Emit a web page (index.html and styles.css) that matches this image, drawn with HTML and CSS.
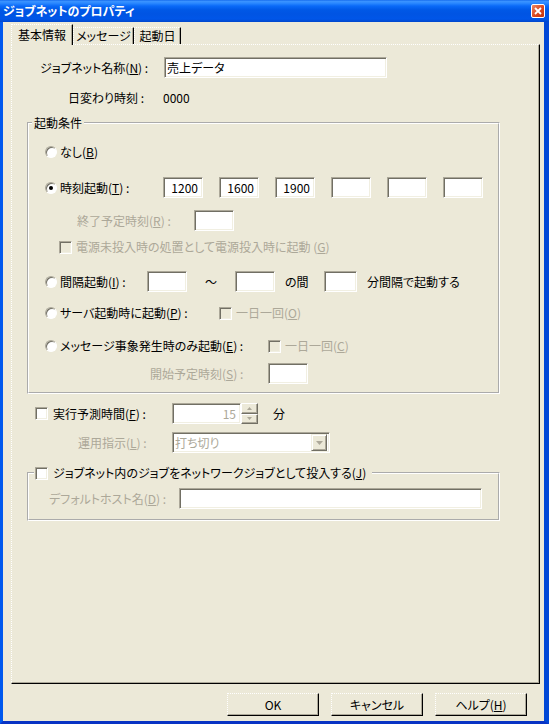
FILE: index.html
```html
<!doctype html>
<html lang="ja">
<head>
  <meta charset="utf-8">
  <meta name="viewport" content="width=device-width,initial-scale=1">
  <title>ジョブネットのプロパティ</title>
  <link rel="stylesheet" href="styles.css">
</head>
<body>
<div class="window">
  <div class="titlebar">
    <span class="title">ジョブネットのプロパティ</span>
    <button class="close" title="閉じる">
      <svg width="8" height="8" viewBox="0 0 8 8"><path d="M1 1L7 7M7 1L1 7" stroke="#fff" stroke-width="1.8"/></svg>
    </button>
  </div>

  <div class="frame">
    <div class="client">
      <div class="tabs">
        <div class="tab tab-info active">基本情報</div>
        <div class="tab tab-msg">メッセージ</div>
        <div class="tab tab-day">起動日</div>
      </div>

      <div class="panel">
        <div class="row row-name">
          <label class="lbl lbl-name">ジョブネット名称(<u>N</u>) :</label>
          <input class="edit edit-name" type="text" value="売上データ">
        </div>
        <div class="row row-day">
          <span class="lbl lbl-day">日変わり時刻 :</span>
          <span>0000</span>
        </div>

        <fieldset class="group group-start">
          <legend>起動条件</legend>
          <div class="group-body">
            <div class="row opt-none">
              <span class="radio"></span><span>なし(<u>B</u>)</span>
            </div>

            <div class="row opt-time">
              <span class="opt-lbl"><span class="radio on"></span><span>時刻起動(<u>T</u>) :</span></span>
              <div class="times">
                <input class="edit num" type="text" value="1200">
                <input class="edit num" type="text" value="1600">
                <input class="edit num" type="text" value="1900">
                <input class="edit num" type="text" value="">
                <input class="edit num" type="text" value="">
                <input class="edit num" type="text" value="">
              </div>
            </div>

            <div class="row opt-end">
              <span class="lbl off">終了予定時刻(<u>R</u>) :</span>
              <input class="edit num" type="text" value="" disabled>
            </div>

            <div class="row opt-power">
              <span class="check off"></span>
              <span class="off">電源未投入時の処置として電源投入時に起動 (<u>G</u>)</span>
            </div>

            <div class="row opt-interval">
              <span class="opt-lbl"><span class="radio"></span><span>間隔起動(<u>I</u>) :</span></span>
              <input class="edit num" type="text" value="">
              <span class="tilde">～</span>
              <input class="edit num" type="text" value="">
              <span class="between">の間</span>
              <input class="edit num edit-step" type="text" value="">
              <span class="after">分間隔で起動する</span>
            </div>

            <div class="row opt-server">
              <span class="opt-lbl"><span class="radio"></span><span>サーバ起動時に起動(<u>P</u>) :</span></span>
              <span class="check off"></span>
              <span class="off">一日一回(<u>O</u>)</span>
            </div>

            <div class="row opt-msg">
              <span class="opt-lbl"><span class="radio"></span><span>メッセージ事象発生時のみ起動(<u>E</u>) :</span></span>
              <span class="check off"></span>
              <span class="off">一日一回(<u>C</u>)</span>
            </div>

            <div class="row opt-begin">
              <span class="lbl off">開始予定時刻(<u>S</u>) :</span>
              <input class="edit num" type="text" value="" disabled>
            </div>
          </div>
        </fieldset>

        <div class="row row-predict">
          <span class="opt-lbl"><span class="check"></span><span>実行予測時間(<u>F</u>) :</span></span>
          <div class="spin">
            <input class="edit num" type="text" value="15" disabled>
            <div class="spin-btns">
              <span class="spin-btn"><svg width="5" height="3" viewBox="0 0 5 3"><path d="M2.5 0L5 3H0Z" fill="#ACA899"/></svg></span>
              <span class="spin-btn"><svg width="5" height="3" viewBox="0 0 5 3"><path d="M0 0H5L2.5 3Z" fill="#ACA899"/></svg></span>
            </div>
          </div>
          <span class="unit">分</span>
        </div>

        <div class="row row-op">
          <span class="lbl off">運用指示(<u>L</u>) :</span>
          <div class="combo">
            <span class="combo-text">打ち切り</span>
            <span class="combo-btn"><svg width="7" height="4" viewBox="0 0 7 4"><path d="M0 0H7L3.5 4Z" fill="#ACA899"/></svg></span>
          </div>
        </div>

        <fieldset class="group group-net">
          <legend><span class="check"></span><span>ジョブネット内のジョブをネットワークジョブとして投入する(<u>J</u>)</span></legend>
          <div class="group-body">
            <div class="row row-host">
              <span class="lbl off">デフォルトホスト名(<u>D</u>) :</span>
              <input class="edit edit-host" type="text" value="" disabled>
            </div>
          </div>
        </fieldset>
      </div>

      <div class="buttons">
        <button class="btn">OK</button>
        <button class="btn">キャンセル</button>
        <button class="btn">ヘルプ(<u>H</u>)</button>
      </div>
    </div>
  </div>
</div>
</body>
</html>
```

FILE: styles.css
```css
*{ box-sizing:border-box; }
body{ margin:0; background:#fff; color:#000; font:12px/16px "Noto Sans CJK JP","Liberation Sans",sans-serif; font-feature-settings:"palt"; }
u{ text-underline-offset:1px; }

.window{ width:549px; height:724px; display:flex; flex-direction:column; }
.titlebar{ height:22px; flex:none; display:flex; align-items:center; justify-content:space-between; padding:0 4px 0 3px;
  background:linear-gradient(#0A5FE8 0,#3D95FF 1px,#2D8AFF 3px,#0A6AF8 6px,#0058E6 10px,#0054E3 14px,#0056E8 19px,#0046CC 22px); }
.title{ color:#fff; font-weight:bold; }
.close{ width:14px; height:14px; padding:0; border:1px solid #fff; border-radius:2px; display:flex; align-items:center; justify-content:center;
  background:linear-gradient(135deg,#EC8866,#D9471F 55%,#C03510); }

.frame{ flex:1; display:flex; border-style:solid; border-width:0 5px 3px 3px; border-color:#0055EA #0047D6 #0833C4 #0058EE; }
.client{ flex:1; display:flex; flex-direction:column; background:#ECE9D8; padding:2px 4px 0 8px; }

/* onglets */
.tabs{ height:20px; display:flex; align-items:flex-end; }
.tab{ height:17px; display:flex; align-items:center; justify-content:center; white-space:nowrap;
  border-top:1px dotted #fff; border-left:1px dotted #fff; border-right:1px solid #000; box-shadow:inset -1px 0 0 #ACA899; }
.tab-info{ width:62px; }
.tab-msg{ width:61px; }
.tab-day{ width:47px; }
.tab.active{ height:21px; margin-bottom:-1px; background:#ECE9D8; position:relative; z-index:1; }

.panel{ height:640px; width:529px; border-top:1px dotted #fff; border-left:1px dotted #fff;
  border-right:1px solid #000; border-bottom:1px solid #000; box-shadow:inset -1px -1px 0 #ACA899; }

/* lignes */
.row{ display:flex; align-items:center; min-height:16px; white-space:nowrap; }
.lbl, .opt-lbl{ flex:none; }
.opt-lbl{ display:flex; align-items:center; }
.off{ color:#ACA899; }

.row-name{ margin-top:12px; padding-left:28px; }
.lbl-name{ width:124px; }
.edit-name{ width:223px; }
.row-day{ margin-top:12px; padding-left:56px; }
.lbl-day{ width:95px; }

/* contrôles */
.edit{ font:inherit; height:21px; margin:0; padding:0 2px; background:#fff; color:#000; outline:none;
  border:1px solid; border-color:#ACA899 #fff #fff #ACA899; box-shadow:inset 1px 1px 0 #716F64, inset -1px -1px 0 #F1EFE2; }
.edit:disabled{ color:#ACA899; }
.num{ width:40px; text-align:right; padding-right:4px; }
.radio{ flex:none; width:12px; height:12px; margin-right:3px; border-radius:50%; background:#fff; display:flex; align-items:center; justify-content:center;
  border:1px solid; border-color:#ACA899 #fff #fff #ACA899; box-shadow:inset 1px 1px 0 #716F64; }
.radio.on::after{ content:""; width:4px; height:4px; border-radius:50%; background:#000; }
.check{ flex:none; width:13px; height:13px; background:#fff;
  border:1px solid; border-color:#ACA899 #fff #fff #ACA899; box-shadow:inset 1px 1px 0 #716F64, inset -1px -1px 0 #F1EFE2; }
.check.off{ background:#ECE9D8; }

/* groupes */
.group{ margin:10px 0 0 15px; width:473px; padding:0; border:2px groove #fff; min-inline-size:0; }
.group legend{ margin-left:3px; padding:0 2px; line-height:14px; }
.group-body{ padding:0 0 8px 16px; }

.opt-none{ margin-top:14px; }
.opt-time{ margin-top:17px; }
.opt-time .opt-lbl{ width:118px; }
.times{ display:flex; gap:16px; }
.opt-end{ margin-top:12px; padding-left:32px; }
.opt-end .lbl{ width:117px; }
.opt-power{ margin-top:8px; padding-left:14px; }
.opt-power .check{ margin-right:4px; }
.opt-interval{ margin-top:16px; }
.opt-interval .opt-lbl{ width:102px; }
.tilde{ width:48px; text-align:center; }
.between{ width:39px; margin-left:10px; }
.edit-step{ width:33px; }
.after{ margin-left:10px; }
.opt-server{ margin-top:13px; }
.opt-server .opt-lbl{ width:174px; }
.opt-msg{ margin-top:17px; }
.opt-msg .opt-lbl{ width:223px; }
.opt-server .check, .opt-msg .check{ margin-right:4px; }
.opt-begin{ margin-top:9px; padding-left:105px; }
.opt-begin .lbl{ width:118px; }

.row-predict{ margin-top:9px; padding-left:23px; }
.row-predict .opt-lbl{ width:137px; }
.row-predict .check{ margin-right:5px; }
.spin{ display:flex; height:21px; }
.spin .edit{ width:69px; }
.spin-btns{ width:17px; display:flex; flex-direction:column; }
.spin-btn{ flex:1; display:flex; align-items:center; justify-content:center; background:#ECE9D8;
  border-top:1px solid #fff; border-left:1px solid #fff; border-right:1px solid #716F64; border-bottom:1px solid #716F64; box-shadow:inset -1px -1px 0 #ACA899; }
.unit{ margin-left:15px; }

.row-op{ margin-top:8px; padding-left:66px; }
.row-op .lbl{ width:94px; }
.combo{ width:158px; height:21px; display:flex; align-items:center; padding:2px; background:#fff;
  border:1px solid; border-color:#ACA899 #fff #fff #ACA899; box-shadow:inset 1px 1px 0 #716F64, inset -1px -1px 0 #F1EFE2; }
.combo-text{ flex:1; color:#ACA899; }
.combo-btn{ width:16px; height:17px; display:flex; align-items:center; justify-content:center; background:#ECE9D8;
  border-top:1px solid #F1EFE2; border-left:1px solid #F1EFE2; border-right:1px solid #716F64; border-bottom:1px solid #716F64; box-shadow:inset 1px 1px 0 #fff, inset -1px -1px 0 #ACA899; }

.group-net{ margin-top:12px; }
.group-net legend{ display:flex; align-items:center; margin-left:5px; padding:0 6px 0 1px; line-height:16px; }
.group-net legend .check{ margin-right:5px; }
.group-net .group-body{ padding:0 0 10px 20px; }
.row-host{ margin-top:7px; }
.row-host .lbl{ width:130px; }
.edit-host{ width:303px; }

/* boutons */
.buttons{ display:flex; justify-content:flex-end; gap:12px; margin:9px 13px 0 0; }
.btn{ width:92px; height:23px; padding:0; font:inherit; color:#000; background:#ECE9D8;
  border-top:1px dotted #fff; border-left:1px dotted #fff; border-right:1px solid #000; border-bottom:1px solid #000; box-shadow:inset -1px -1px 0 #ACA899; }
```
